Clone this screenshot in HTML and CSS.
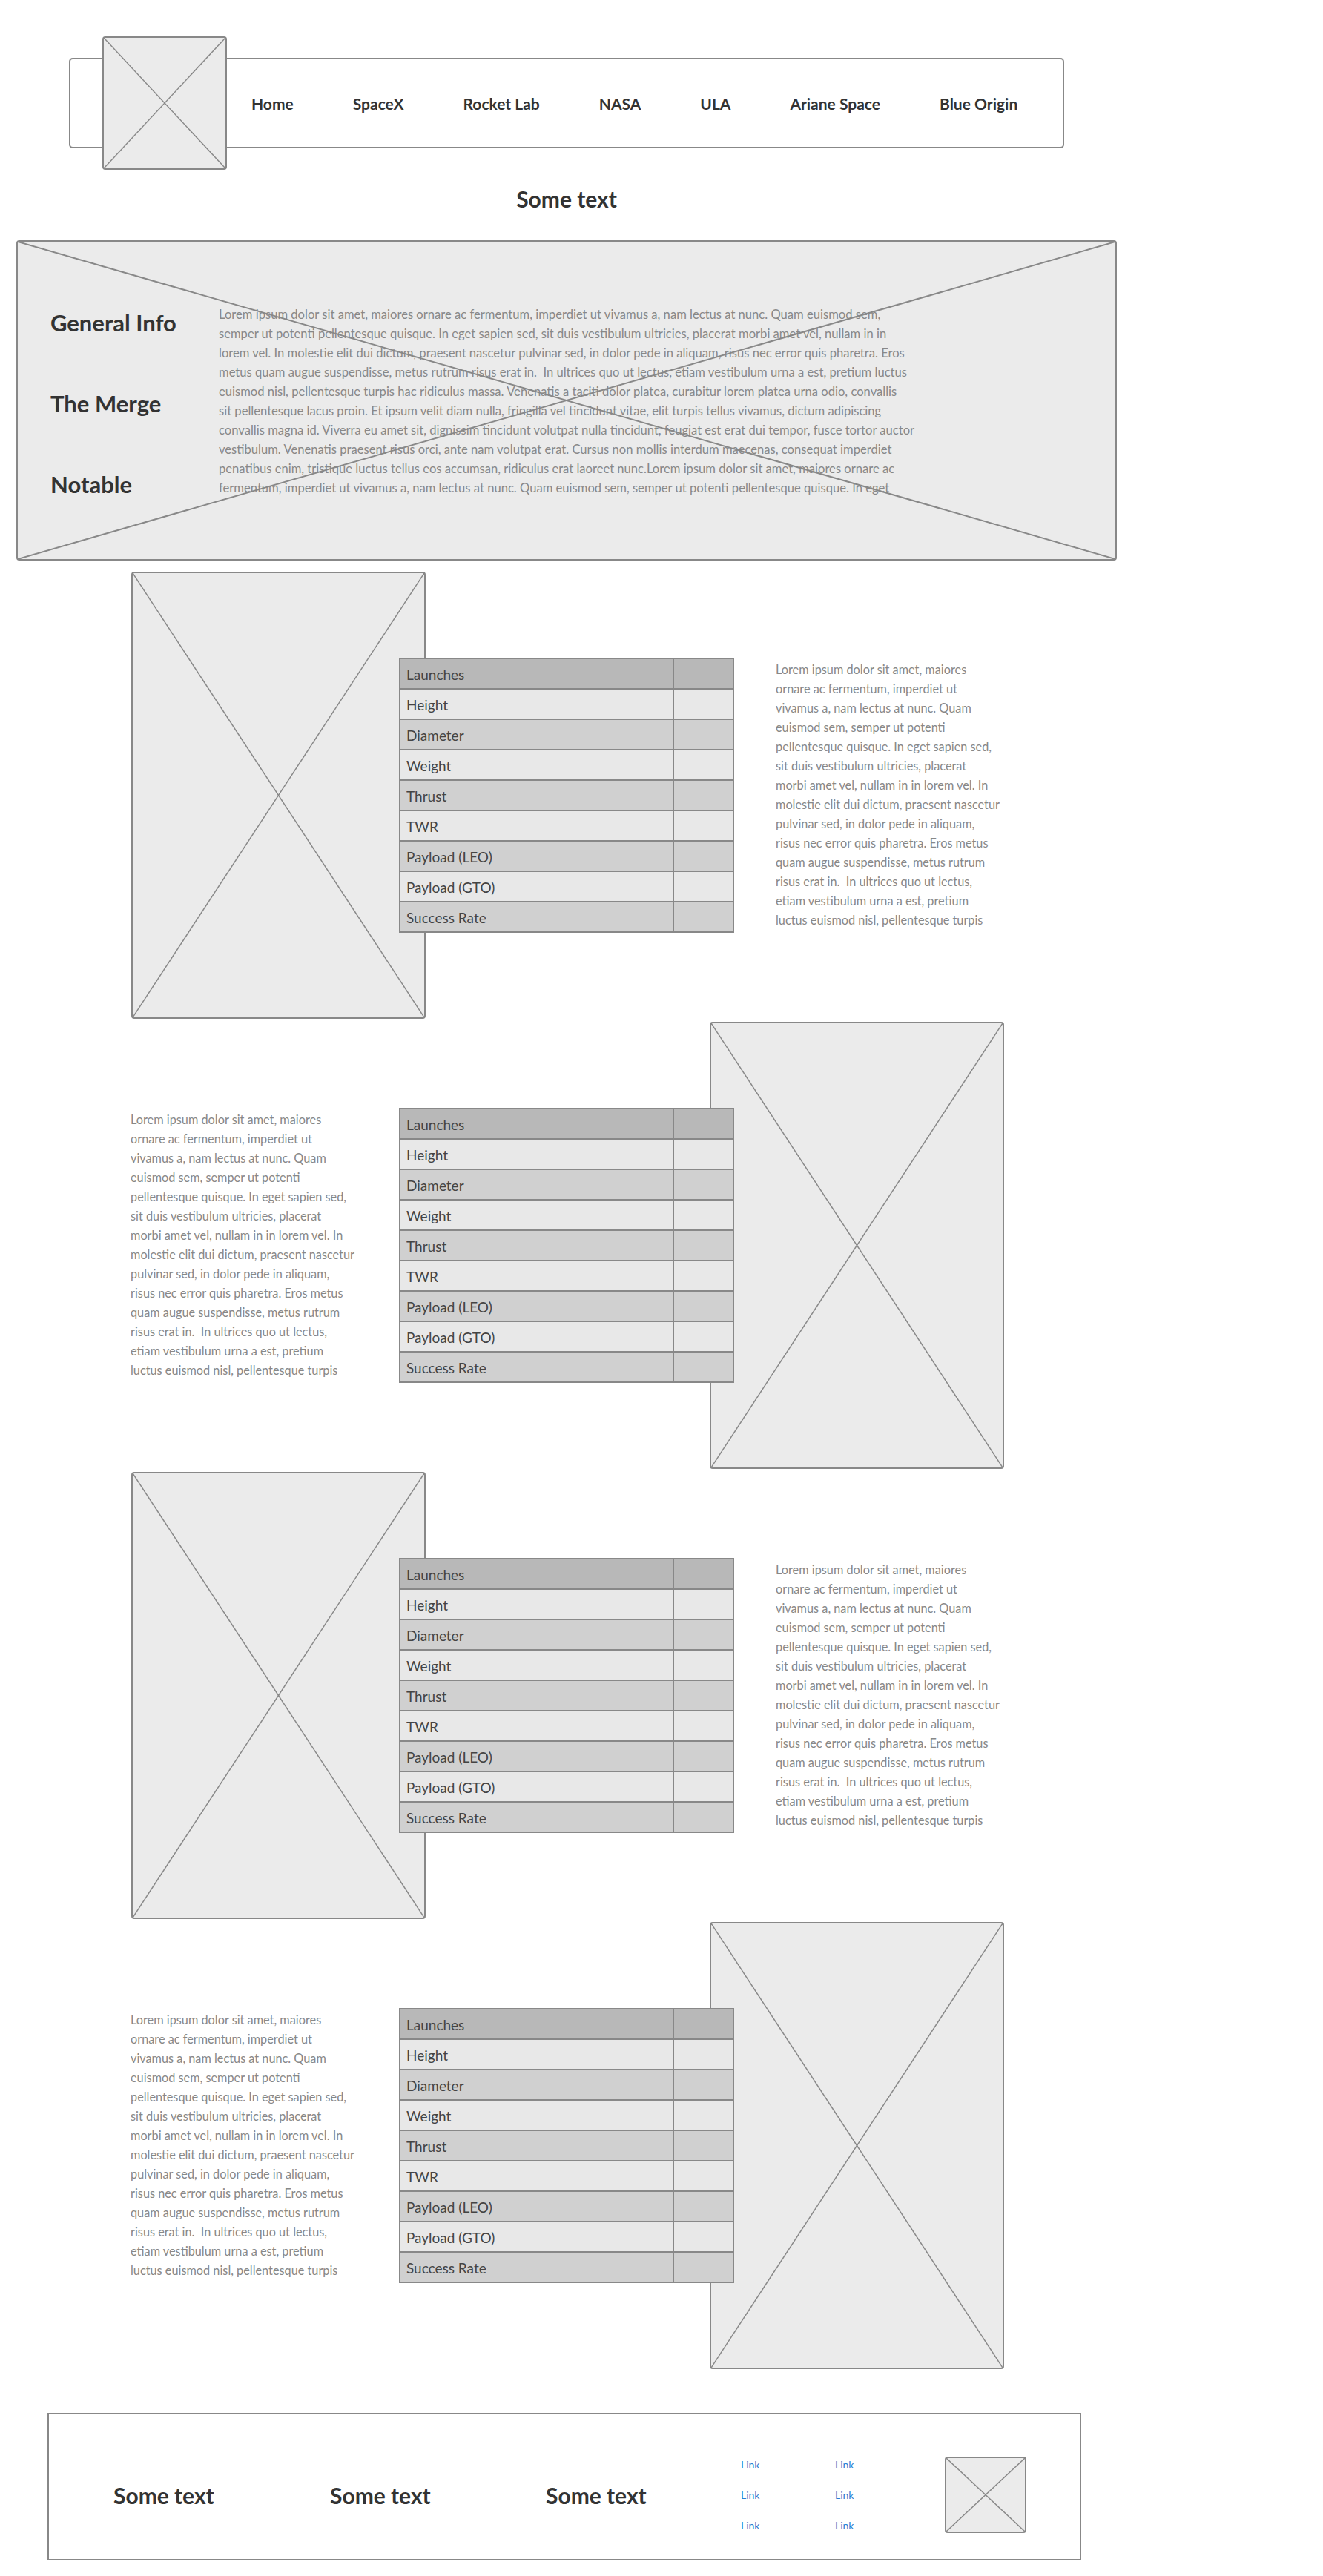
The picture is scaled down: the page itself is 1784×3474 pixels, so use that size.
FILE: index.html
```html
<!DOCTYPE html>
<html lang="en">
<head>
    <meta charset="UTF-8">
    <meta name="viewport" content="width=device-width, initial-scale=1.0">
    <title>Rockets</title>
    <link rel="stylesheet" href="styles.css">
</head>
<body>
<div class="page">
    <header class="site-header">
        <nav class="nav">
            <div class="placeholder logo">
                <svg class="cross" viewBox="0 0 100 100" preserveAspectRatio="none"><line x1="0" y1="0" x2="100" y2="100"/><line x1="100" y1="0" x2="0" y2="100"/></svg>
            </div>
            <a href="#" class="nav-link">Home</a>
            <a href="#" class="nav-link">SpaceX</a>
            <a href="#" class="nav-link">Rocket Lab</a>
            <a href="#" class="nav-link">NASA</a>
            <a href="#" class="nav-link">ULA</a>
            <a href="#" class="nav-link">Ariane Space</a>
            <a href="#" class="nav-link">Blue Origin</a>
        </nav>
    </header>

    <h1 class="page-title">Some text</h1>

    <section class="hero">
        <svg class="cross" viewBox="0 0 100 100" preserveAspectRatio="none"><line x1="0" y1="0" x2="100" y2="100"/><line x1="100" y1="0" x2="0" y2="100"/></svg>
        <div class="hero-headings">
            <h2>General Info</h2>
            <h2>The Merge</h2>
            <h2>Notable</h2>
        </div>
        <p class="hero-text">Lorem ipsum dolor sit amet, maiores ornare ac fermentum, imperdiet ut vivamus a, nam lectus at nunc. Quam euismod sem,<br>
semper ut potenti pellentesque quisque. In eget sapien sed, sit duis vestibulum ultricies, placerat morbi amet vel, nullam in in<br>
lorem vel. In molestie elit dui dictum, praesent nascetur pulvinar sed, in dolor pede in aliquam, risus nec error quis pharetra. Eros<br>
metus quam augue suspendisse, metus rutrum risus erat in.&nbsp; In ultrices quo ut lectus, etiam vestibulum urna a est, pretium luctus<br>
euismod nisl, pellentesque turpis hac ridiculus massa. Venenatis a taciti dolor platea, curabitur lorem platea urna odio, convallis<br>
sit pellentesque lacus proin. Et ipsum velit diam nulla, fringilla vel tincidunt vitae, elit turpis tellus vivamus, dictum adipiscing<br>
convallis magna id. Viverra eu amet sit, dignissim tincidunt volutpat nulla tincidunt, feugiat est erat dui tempor, fusce tortor auctor<br>
vestibulum. Venenatis praesent risus orci, ante nam volutpat erat. Cursus non mollis interdum maecenas, consequat imperdiet<br>
penatibus enim, tristique luctus tellus eos accumsan, ridiculus erat laoreet nunc.Lorem ipsum dolor sit amet, maiores ornare ac<br>
fermentum, imperdiet ut vivamus a, nam lectus at nunc. Quam euismod sem, semper ut potenti pellentesque quisque. In eget</p>
    </section>

    <main class="rockets" id="rockets"></main>

    <footer class="footer">
        <div class="footer-title">Some text</div>
        <div class="footer-title">Some text</div>
        <div class="footer-title">Some text</div>
        <div class="footer-links">
            <a href="#">Link</a>
            <a href="#">Link</a>
            <a href="#">Link</a>
        </div>
        <div class="footer-links">
            <a href="#">Link</a>
            <a href="#">Link</a>
            <a href="#">Link</a>
        </div>
        <div class="placeholder footer-logo">
            <svg class="cross" viewBox="0 0 100 100" preserveAspectRatio="none"><line x1="0" y1="0" x2="100" y2="100"/><line x1="100" y1="0" x2="0" y2="100"/></svg>
        </div>
    </footer>
</div>

<script>
    const specs = ["Launches", "Height", "Diameter", "Weight", "Thrust", "TWR", "Payload (LEO)", "Payload (GTO)", "Success Rate"];

    const lorem = [
        "Lorem ipsum dolor sit amet, maiores",
        "ornare ac fermentum, imperdiet ut",
        "vivamus a, nam lectus at nunc. Quam",
        "euismod sem, semper ut potenti",
        "pellentesque quisque. In eget sapien sed,",
        "sit duis vestibulum ultricies, placerat",
        "morbi amet vel, nullam in in lorem vel. In",
        "molestie elit dui dictum, praesent nascetur",
        "pulvinar sed, in dolor pede in aliquam,",
        "risus nec error quis pharetra. Eros metus",
        "quam augue suspendisse, metus rutrum",
        "risus erat in.&nbsp; In ultrices quo ut lectus,",
        "etiam vestibulum urna a est, pretium",
        "luctus euismod nisl, pellentesque turpis"
    ];

    const cross = '<svg class="cross" viewBox="0 0 100 100" preserveAspectRatio="none"><line x1="0" y1="0" x2="100" y2="100"/><line x1="100" y1="0" x2="0" y2="100"/></svg>';

    function buildTable() {
        let rows = "";
        specs.forEach(name => {
            rows += `<tr><td>${name}</td><td></td></tr>`;
        });
        return `<table class="specs">${rows}</table>`;
    }

    const rocketsElement = document.getElementById("rockets");

    // four rockets, image side alternates
    for (let i = 0; i < 4; i++) {
        const row = document.createElement("section");
        const image = `<div class="placeholder rocket-image">${cross}</div>`;
        const text = `<p class="rocket-text">${lorem.join("<br>")}</p>`;
        if (i % 2 === 0) {
            row.className = "rocket rocket-left";
            row.innerHTML = image + buildTable() + text;
        } else {
            row.className = "rocket rocket-right";
            row.innerHTML = text + buildTable() + image;
        }
        rocketsElement.appendChild(row);
    }
</script>
</body>
</html>
```

FILE: styles.css
```css
body {
    margin: 0;
    font-family: Lato, "Liberation Sans", sans-serif;
    background: #fff;
    color: #333;
}

.page {
    width: 1528px;
}

/* Placeholders */
.placeholder {
    position: relative;
    box-sizing: border-box;
    background: #ebebeb;
    border: 2px solid #888;
    border-radius: 4px;
}

.cross {
    position: absolute;
    top: 0;
    left: 0;
    width: 100%;
    height: 100%;
}

.cross line {
    stroke: #888;
    stroke-width: 1.5;
    vector-effect: non-scaling-stroke;
}

/* Header */
.site-header {
    padding-top: 78px;
}

.nav {
    display: flex;
    align-items: center;
    box-sizing: border-box;
    width: 1342px;
    height: 122px;
    margin-left: 93px;
    border: 2px solid #888;
    border-radius: 5px;
}

.logo {
    flex: none;
    width: 168px;
    height: 180px;
    margin-left: 43px;
    margin-right: 33px;
}

.nav-link {
    flex: none;
    font-size: 21px;
    font-weight: bold;
    color: #333;
    text-decoration: none;
    white-space: nowrap;
}

.nav-link + .nav-link {
    margin-left: 80px;
}

.page-title {
    margin: 50px 0 0;
    text-align: center;
    font-size: 30px;
    line-height: 36px;
    color: #333;
}

/* Hero */
.hero {
    position: relative;
    display: flex;
    box-sizing: border-box;
    height: 432px;
    margin: 38px 22px 0;
    padding: 85px 0 0 44px;
    background: #ebebeb;
    border: 2px solid #888;
    border-radius: 4px;
}

.hero .cross line {
    stroke-width: 2;
}

.hero-headings {
    flex: none;
    width: 227px;
    padding-top: 6px;
}

.hero-headings h2 {
    margin: 0 0 73px;
    font-size: 31px;
    line-height: 36px;
    color: #333;
}

.hero-text {
    margin: 0;
    font-size: 16.6px;
    line-height: 26px;
    color: #888;
    white-space: nowrap;
}

/* Rockets */
.rockets {
    margin-top: 15px;
}

.rocket {
    display: flex;
    align-items: flex-start;
    height: 603px;
    margin-bottom: 4px;
    padding-left: 176px;
}

.rocket-image {
    flex: none;
    width: 397px;
    height: 603px;
}

.rocket-left .rocket-image {
    margin-left: 1px;
}

.specs {
    position: relative;
    z-index: 1;
    flex: none;
    width: 452px;
    margin-top: 116px;
    border-collapse: collapse;
}

.rocket-left .specs {
    margin-left: -36px;
}

.specs td {
    height: 37px;
    padding: 2px 8px 0;
    border: 2px solid #888;
    font-size: 19px;
    color: #444;
    background: #d0d0d0;
}

.specs td + td {
    width: 79px;
    padding: 0;
}

.specs tr:first-child td {
    background: #b8b8b8;
}

.specs tr:nth-child(even) td {
    background: #e8e8e8;
}

.rocket-text {
    flex: none;
    margin: 119px 0 0;
    font-size: 16.3px;
    line-height: 26px;
    color: #888;
    white-space: nowrap;
}

.rocket-left .rocket-text {
    margin-left: 56px;
}

.rocket-right .rocket-text {
    width: 362px;
}

.rocket-right .rocket-image {
    margin-left: -33px;
}

/* Footer */
.footer {
    display: flex;
    align-items: center;
    box-sizing: border-box;
    width: 1394px;
    height: 199px;
    margin: 59px 0 40px 64px;
    padding: 22px 0 0 87px;
    border: 2px solid #888;
}

.footer-title {
    flex: none;
    width: 292px;
    font-size: 30px;
    line-height: 36px;
    font-weight: bold;
    color: #333;
}

.footer-title:nth-child(2) {
    width: 291px;
}

.footer-title:nth-child(3) {
    width: 263px;
}

.footer-links {
    display: flex;
    flex-direction: column;
    gap: 21px;
    width: 127px;
}

.footer-links + .footer-links {
    width: 148px;
}

.footer-links a {
    font-size: 14px;
    line-height: 20px;
    color: #2a7fd4;
    text-decoration: none;
}

.footer-logo {
    flex: none;
    width: 110px;
    height: 103px;
}
```
